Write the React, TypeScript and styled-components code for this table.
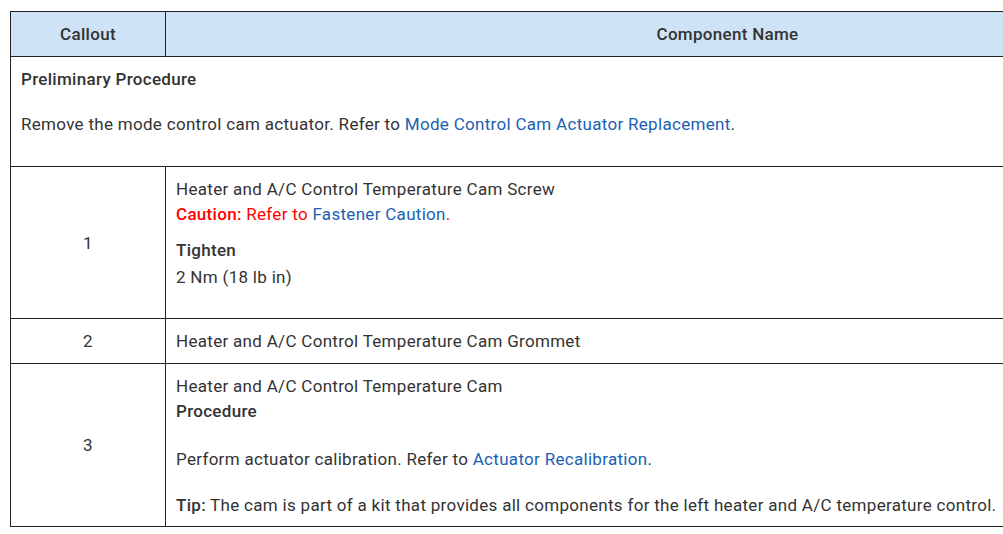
import React from "react";
import styled, { createGlobalStyle } from "styled-components";

const GlobalStyle = createGlobalStyle`
    html, body {
        margin: 0;
        padding: 0;
        background: #fff;
        overflow: hidden;
    }
    body {
        font-family: Roboto, "Liberation Sans", Arial, sans-serif;
        font-size: 17px;
        letter-spacing: 0.3px;
        color: #333;
    }
`;

const Page = styled.div`
    padding: 11px 0 0 10px;
    width: 1300px;
`;

const Table = styled.table`
    width: 1280px;
    border-collapse: collapse;
    line-height: 25.6px;
    th, td {
        border: 1px solid #222;
        padding: 10px 10px 8px;
        vertical-align: middle;
    }
`;

const HeadCell = styled.th<{ $width?: number }>`
    background: #cfe3f6;
    font-weight: 500;
    text-align: center;
    color: #333;
    width: ${(p) => (p.$width ? `${p.$width}px` : "auto")};
`;

const CalloutCell = styled.td`
    text-align: center;
`;

const Label = styled.div`
    font-weight: 500;
`;

const Para = styled.p<{ $top?: number; $bottom?: number }>`
    margin: ${(p) => p.$top ?? 0}px 0 ${(p) => p.$bottom ?? 0}px;
`;

const Torque = styled.div`
    margin-top: 1px;
`;

const Link = styled.a`
    color: #1a5fb4;
    text-decoration: none;
`;

const Caution = styled.span`
    color: #f00;
    strong {
        font-weight: 500;
    }
`;

const App = () => (
    <Page>
        <GlobalStyle />
        <Table>
            <thead>
                <tr>
                    <HeadCell $width={134}>Callout</HeadCell>
                    <HeadCell>Component Name</HeadCell>
                </tr>
            </thead>
            <tbody>
                <tr>
                    <td colSpan={2}>
                        <Label>Preliminary Procedure</Label>
                        <Para $top={20} $bottom={20}>
                            Remove the mode control cam actuator. Refer to{" "}
                            <Link>Mode Control Cam Actuator Replacement</Link>.
                        </Para>
                    </td>
                </tr>
                <tr>
                    <CalloutCell>1</CalloutCell>
                    <td>
                        <div>Heater and A/C Control Temperature Cam Screw</div>
                        <Caution>
                            <strong>Caution:</strong> Refer to <Link>Fastener Caution</Link>.
                        </Caution>
                        <Para $top={10} $bottom={20}>
                            <Label>Tighten</Label>
                            <Torque>2 Nm (18 lb in)</Torque>
                        </Para>
                    </td>
                </tr>
                <tr>
                    <CalloutCell>2</CalloutCell>
                    <td>Heater and A/C Control Temperature Cam Grommet</td>
                </tr>
                <tr>
                    <CalloutCell>3</CalloutCell>
                    <td>
                        <div>Heater and A/C Control Temperature Cam</div>
                        <Label>Procedure</Label>
                        <Para $top={22}>
                            Perform actuator calibration. Refer to <Link>Actuator Recalibration</Link>.
                        </Para>
                        <Para $top={20}>
                            <Label as="span">Tip:</Label> The cam is part of a kit that provides all
                            components for the left heater and A/C temperature control.
                        </Para>
                    </td>
                </tr>
            </tbody>
        </Table>
    </Page>
);

export default App;
